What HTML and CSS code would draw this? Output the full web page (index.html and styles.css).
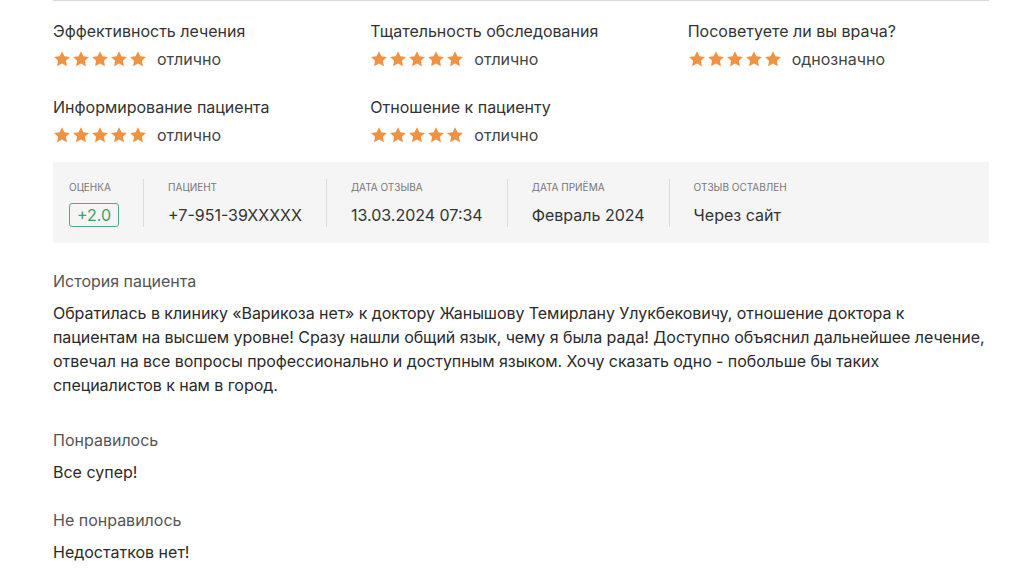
FILE: index.html
```html
<!DOCTYPE html>
<html>
<head>
  <meta charset="UTF-8" />
  <title>Отзыв пациента</title>
  <link rel="stylesheet" href="styles.css">
</head>
<body>
  <div class="review">
    <div class="ratings">
      <div class="rating">
        <div class="rating-title">Эффективность лечения</div>
        <div class="rating-row"><span class="stars" data-n="5"></span><span class="rating-word">отлично</span></div>
      </div>
      <div class="rating">
        <div class="rating-title">Тщательность обследования</div>
        <div class="rating-row"><span class="stars" data-n="5"></span><span class="rating-word">отлично</span></div>
      </div>
      <div class="rating">
        <div class="rating-title">Посоветуете ли вы врача?</div>
        <div class="rating-row"><span class="stars" data-n="5"></span><span class="rating-word">однозначно</span></div>
      </div>
      <div class="rating">
        <div class="rating-title">Информирование пациента</div>
        <div class="rating-row"><span class="stars" data-n="5"></span><span class="rating-word">отлично</span></div>
      </div>
      <div class="rating">
        <div class="rating-title">Отношение к пациенту</div>
        <div class="rating-row"><span class="stars" data-n="5"></span><span class="rating-word">отлично</span></div>
      </div>
    </div>

    <div class="info">
      <div class="info-item">
        <div class="info-label">Оценка</div>
        <div class="info-value"><span class="score">+2.0</span></div>
      </div>
      <div class="info-item">
        <div class="info-label">Пациент</div>
        <div class="info-value">+7-951-39XXXXX</div>
      </div>
      <div class="info-item">
        <div class="info-label">Дата отзыва</div>
        <div class="info-value">13.03.2024 07:34</div>
      </div>
      <div class="info-item">
        <div class="info-label">Дата приёма</div>
        <div class="info-value">Февраль 2024</div>
      </div>
      <div class="info-item">
        <div class="info-label">Отзыв оставлен</div>
        <div class="info-value">Через сайт</div>
      </div>
    </div>

    <div class="block block-story">
      <div class="block-title">История пациента</div>
      <p class="block-text">Обратилась в клинику «Варикоза нет» к доктору Жанышову Темирлану Улукбековичу, отношение доктора к пациентам на высшем уровне! Сразу нашли общий язык, чему я была рада! Доступно объяснил дальнейшее лечение, отвечал на все вопросы профессионально и доступным языком. Хочу сказать одно - побольше бы таких специалистов к нам в город.</p>
    </div>

    <div class="block">
      <div class="block-title">Понравилось</div>
      <p class="block-text">Все супер!</p>
    </div>

    <div class="block">
      <div class="block-title">Не понравилось</div>
      <p class="block-text">Недостатков нет!</p>
    </div>
  </div>

  <script>
    // звёзды рисуем одним svg на каждую
    var star = '<svg class="star" viewBox="0 0 24 24"><path d="M12 1.5l3.2 6.7 7.3 1-5.3 5 1.4 7.3L12 18l-6.6 3.5 1.4-7.3-5.3-5 7.3-1z"/></svg>';
    document.querySelectorAll(".stars").forEach(function (el) {
      el.innerHTML = star.repeat(+el.dataset.n);
    });
  </script>
</body>
</html>
```

FILE: styles.css
```css
body {
  font-family: Inter, "Noto Sans", sans-serif;
  font-size: 16px;
  color: #2a2a2a;
  background: #fff;
  margin: 0;
}

.review {
  width: 936px;
  margin-left: 53px;
  border-top: 1px solid #d9d9d9;
  padding-top: 19px;
}

.ratings {
  display: grid;
  grid-template-columns: repeat(3, 1fr);
  column-gap: 16px;
  row-gap: 26px;
}

.rating-title {
  line-height: 22px;
  color: #333;
}

.rating-row {
  display: flex;
  align-items: center;
  margin-top: 6px;
  height: 22px;
}

.stars {
  display: flex;
  gap: 1px;
  margin-right: 10px;
}

.star {
  width: 18px;
  height: 18px;
  fill: #ef9343;
}

.rating-word {
  color: #444;
}

.info {
  display: flex;
  background: #f5f5f5;
  margin-top: 16px;
  padding: 17px 0 16px;
}

.info-item {
  padding: 0 24px;
  border-left: 1px solid #dcdcdc;
}

.info-item:first-child {
  padding-left: 16px;
  border-left: none;
}

.info-label {
  font-size: 10px;
  text-transform: uppercase;
  color: #777;
  line-height: 16px;
}

.info-value {
  margin-top: 8px;
  line-height: 24px;
  color: #333;
}

.score {
  display: inline-block;
  color: #37a06c;
  border: 1px solid #4fae7e;
  border-radius: 3px;
  padding: 0 7px;
  line-height: 22px;
}

.block {
  margin-top: 24px;
}

.block-story {
  margin-top: 26px;
  padding-bottom: 7px;
}

.block-story .block-text {
  letter-spacing: -0.06px;
}

.block-title {
  color: #555;
  line-height: 24px;
}

.block-text {
  margin: 8px 0 0;
  line-height: 24px;
}
```
